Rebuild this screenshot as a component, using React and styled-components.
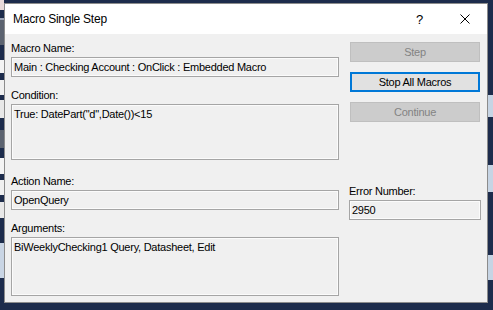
import React from "react";
import styled, { createGlobalStyle } from "styled-components";

const NAVY = "#1d2c4c";

const GlobalStyle = createGlobalStyle`
  html, body {
    margin: 0;
    padding: 0;
    background: ${NAVY};
  }
  body {
    font-family: "Liberation Sans", Arial, sans-serif;
  }
`;

// bits of the Access window peeking out behind the dialog
const leftStrip = [
  { h: 10, bg: "#e8dada" },
  { h: 8, bg: NAVY },
  { h: 2, bg: "#9aa3b5" },
  { h: 25, bg: "#5c6370" },
  { h: 15, bg: NAVY },
  { h: 13, bg: "#f4f4f4" },
  { h: 7, bg: NAVY },
  { h: 15, bg: "#f0f0f0" },
  { h: 5, bg: NAVY },
  { h: 18, bg: "#e8e8e8" },
  { h: 12, bg: NAVY },
  { h: 18, bg: "#5c6370" },
  { h: 10, bg: NAVY },
  { h: 16, bg: "#f4f4f4" },
  { h: 6, bg: NAVY },
  { h: 15, bg: "#f0f0f0" },
  { h: 7, bg: NAVY },
  { h: 16, bg: "#e8e8e8" },
  { h: 25, bg: NAVY },
  { h: 35, bg: "#c9d5e4" },
];

const rightStrip = [
  { h: 95, bg: NAVY },
  { h: 22, bg: "#c6d4e4" },
  { h: 48, bg: NAVY },
  { h: 27, bg: "#c6d4e4" },
  { h: 63, bg: NAVY },
  { h: 25, bg: "#c6d4e4" },
];

const App = () => {
  return (
    <>
      <GlobalStyle />
      <Desktop>
        <Strip $col={1}>
          {leftStrip.map((s, i) => (
            <Segment key={i} $h={s.h} $bg={s.bg} />
          ))}
        </Strip>

        <Dialog>
          <TitleBar>
            <Title>Macro Single Step</Title>
            <CaptionButton>
              <HelpGlyph>?</HelpGlyph>
            </CaptionButton>
            <CaptionButton>
              <svg width="10" height="10" viewBox="0 0 10 10">
                <path
                  d="M0.5 0.5 L9.5 9.5 M9.5 0.5 L0.5 9.5"
                  stroke="#000"
                  strokeWidth="1"
                  fill="none"
                />
              </svg>
            </CaptionButton>
          </TitleBar>

          <Body>
            <LeftCol>
              <Label>Macro Name:</Label>
              <Field $h={20}>Main : Checking Account : OnClick : Embedded Macro</Field>

              <Label $mt={11}>Condition:</Label>
              <Field $h={56}>True: DatePart("d",Date())&lt;15</Field>

              <Label $mt={14}>Action Name:</Label>
              <Field $h={20}>OpenQuery</Field>

              <Label $mt={11}>Arguments:</Label>
              <Field $h={59}>BiWeeklyChecking1 Query, Datasheet, Edit</Field>
            </LeftCol>

            <RightCol>
              <ButtonStack>
                <Button $disabled>Step</Button>
                <Button $focused>Stop All Macros</Button>
                <Button $disabled>Continue</Button>
              </ButtonStack>

              <Label $mt={62}>Error Number:</Label>
              <Field $h={20}>2950</Field>
            </RightCol>
          </Body>
        </Dialog>

        <Strip $col={3}>
          {rightStrip.map((s, i) => (
            <Segment key={i} $h={s.h} $bg={s.bg} />
          ))}
        </Strip>
      </Desktop>
    </>
  );
};

export default App;

const Desktop = styled.div`
  width: 493px;
  height: 310px;
  overflow: hidden;
  background: ${NAVY};
  display: grid;
  grid-template-columns: 4px 484px 5px;
  grid-template-rows: 3px 300px 7px;
`;

const Strip = styled.div`
  grid-column: ${(p) => p.$col};
  grid-row: 1 / -1;
  display: flex;
  flex-direction: column;
  overflow: hidden;
`;

const Segment = styled.div`
  flex-shrink: 0;
  height: ${(p) => p.$h}px;
  background: ${(p) => p.$bg};
`;

const Dialog = styled.div`
  grid-column: 2;
  grid-row: 2;
  box-sizing: border-box;
  border: 1px solid #8c8c8c;
  background: #f0f0f0;
  display: flex;
  flex-direction: column;
  overflow: hidden;
`;

const TitleBar = styled.div`
  height: 30px;
  flex-shrink: 0;
  background: #fff;
  display: flex;
  align-items: center;
`;

const Title = styled.div`
  flex: 1;
  padding-left: 8px;
  font-size: 12px;
  letter-spacing: -0.25px;
  color: #000;
`;

const CaptionButton = styled.div`
  width: 45px;
  height: 30px;
  display: flex;
  align-items: center;
  justify-content: center;
`;

const HelpGlyph = styled.span`
  font-size: 13px;
  color: #000;
`;

const Body = styled.div`
  flex: 1;
  display: flex;
  gap: 10px;
  padding: 7px 6px 0 6px;
`;

const LeftCol = styled.div`
  width: 328px;
  display: flex;
  flex-direction: column;
`;

const RightCol = styled.div`
  width: 132px;
  display: flex;
  flex-direction: column;
`;

const ButtonStack = styled.div`
  display: flex;
  flex-direction: column;
  gap: 10px;
  margin: 1px 1px 0 1px;
`;

const Label = styled.div`
  height: 14px;
  line-height: 14px;
  margin-top: ${(p) => p.$mt || 0}px;
  font-size: 11px;
  letter-spacing: -0.25px;
  color: #000;
  white-space: nowrap;
`;

const Field = styled.div`
  box-sizing: border-box;
  height: ${(p) => p.$h}px;
  margin-top: 2px;
  padding: 2px 2px 0 2px;
  border: 1px solid #a5a5a5;
  box-shadow: inset 0 0 0 1px #fbfbfb;
  background: #f0f0f0;
  font-size: 11px;
  line-height: 14px;
  letter-spacing: -0.25px;
  color: #000;
  white-space: nowrap;
  overflow: hidden;
`;

const Button = styled.div`
  box-sizing: border-box;
  height: 20px;
  display: flex;
  align-items: center;
  justify-content: center;
  font-size: 11px;
  letter-spacing: -0.25px;
  background: ${(p) => (p.$disabled ? "#cccccc" : "#e1e1e1")};
  color: ${(p) => (p.$disabled ? "#838383" : "#000")};
  border: ${(p) => (p.$focused ? "2px solid #0078d7" : "1px solid #bfbfbf")};
`;
